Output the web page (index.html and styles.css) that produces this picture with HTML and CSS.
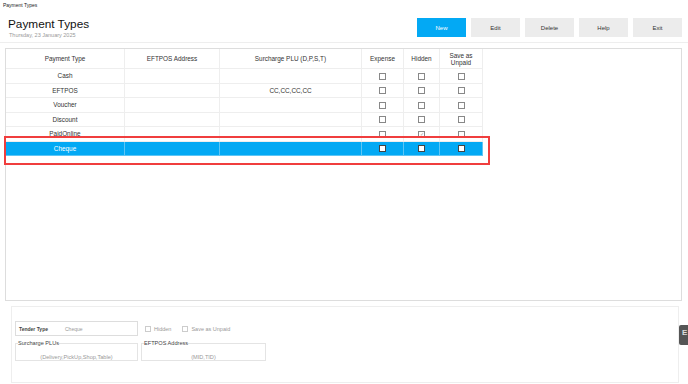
FILE: index.html
```html
<!DOCTYPE html>
<html lang="en">
  <head>
    <meta charset="UTF-8" />
    <title>Payment Types</title>
    <link rel="stylesheet" href="styles.css">
  </head>
  <body>
    <div class="titlebar">Payment Types</div>
    <div class="header">
      <div class="heading">
        <h1>Payment Types</h1>
        <div class="date">Thursday, 23 January 2025</div>
      </div>
      <div class="buttons">
        <button class="btn primary">New</button>
        <button class="btn">Edit</button>
        <button class="btn">Delete</button>
        <button class="btn">Help</button>
        <button class="btn">Exit</button>
      </div>
    </div>

    <!-- Payment type grid -->
    <div class="grid-panel">
      <table class="grid">
        <thead>
          <tr>
            <th class="c-type">Payment Type</th>
            <th class="c-eft">EFTPOS Address</th>
            <th class="c-plu">Surcharge PLU (D,P,S,T)</th>
            <th class="c-exp">Expense</th>
            <th class="c-hid">Hidden</th>
            <th class="c-unp">Save as<br>Unpaid</th>
          </tr>
        </thead>
        <tbody>
          <tr>
            <td>Cash</td><td></td><td></td>
            <td><span class="cb"></span></td><td><span class="cb"></span></td><td><span class="cb"></span></td>
          </tr>
          <tr>
            <td>EFTPOS</td><td></td><td>CC,CC,CC,CC</td>
            <td><span class="cb"></span></td><td><span class="cb"></span></td><td><span class="cb"></span></td>
          </tr>
          <tr>
            <td>Voucher</td><td></td><td></td>
            <td><span class="cb"></span></td><td><span class="cb"></span></td><td><span class="cb"></span></td>
          </tr>
          <tr>
            <td>Discount</td><td></td><td></td>
            <td><span class="cb"></span></td><td><span class="cb"></span></td><td><span class="cb"></span></td>
          </tr>
          <tr>
            <td>PaidOnline</td><td></td><td></td>
            <td><span class="cb"></span></td><td><span class="cb checked">&#10003;</span></td><td><span class="cb"></span></td>
          </tr>
          <tr class="selected">
            <td>Cheque</td><td></td><td></td>
            <td><span class="cb"></span></td><td><span class="cb"></span></td><td><span class="cb"></span></td>
          </tr>
        </tbody>
      </table>
      <div class="highlight"></div>
    </div>

    <!-- Detail editor -->
    <div class="detail-panel">
      <div class="detail-row">
        <div class="field">
          <span class="field-label">Tender Type</span>
          <span class="field-value">Cheque</span>
        </div>
        <label class="check"><span class="cb small"></span>Hidden</label>
        <label class="check"><span class="cb small"></span>Save as Unpaid</label>
      </div>
      <div class="detail-row">
        <fieldset class="group">
          <legend>Surcharge PLUs</legend>
          <div class="hint">(Delivery,PickUp,Shop,Table)</div>
        </fieldset>
        <fieldset class="group wide">
          <legend>EFTPOS Address</legend>
          <div class="hint">(MID,TID)</div>
        </fieldset>
      </div>
    </div>

    <div class="side-tab">E</div>
  </body>
</html>
```

FILE: styles.css
```css
/* Payment types screen */
body {
  font-family: "Liberation Sans", Arial, sans-serif;
  margin: 0;
  padding: 0;
  width: 688px;
  height: 384px;
  overflow: hidden;
  background-color: #fff;
  color: #333;
  position: relative;
}
.titlebar {
  height: 10px;
  line-height: 10px;
  font-size: 5px;
  padding-left: 3px;
  color: #222;
}
.header {
  display: flex;
  justify-content: space-between;
  height: 32px;
  padding: 0 6px 0 8px;
  border-bottom: 1px solid #eee;
}
h1 {
  font-size: 11.8px;
  font-weight: normal;
  line-height: 15px;
  margin: 7px 0 0 0;
  color: #111;
}
.date {
  font-size: 5.5px;
  line-height: 7px;
  color: #999;
  margin-left: 1px;
}
.buttons {
  display: flex;
  gap: 5px;
  margin-top: 8px;
}
.btn {
  width: 49px;
  height: 19px;
  border: none;
  padding: 0;
  font-family: inherit;
  font-size: 6px;
  color: #333;
  background-color: #ececec;
}
.btn.primary {
  background-color: #03a9f4;
  color: #fff;
}
.grid-panel {
  position: relative;
  margin: 5px 6px 0 5px;
  height: 251px;
  border: 1px solid #ddd;
}
.grid {
  border-collapse: collapse;
  font-size: 6.4px;
  color: #333;
}
.grid th,
.grid td {
  border: 1px solid #eee;
  text-align: center;
  padding: 0;
  font-weight: normal;
}
.grid tr:first-child th {
  border-top: none;
}
.grid th:first-child,
.grid td:first-child {
  border-left: none;
}
.grid th {
  height: 19px;
  line-height: 7px;
}
.grid td {
  height: 13.5px;
}
.c-type { width: 118px; }
.c-eft { width: 94px; }
.c-plu { width: 141px; }
.c-exp { width: 41px; }
.c-hid { width: 35px; }
.c-unp { width: 42px; }
.cb {
  display: inline-block;
  width: 5px;
  height: 5px;
  border: 1px solid #888;
  background-color: #fff;
  vertical-align: middle;
  font-size: 5px;
  line-height: 5px;
  color: #999;
}
.selected td {
  background-color: #03a9f4;
  color: #fff;
  border-color: #5ec6f5;
}
.selected .cb {
  border-color: #444;
}
.highlight {
  position: absolute;
  left: -2px;
  top: 87px;
  width: 486px;
  height: 29px;
  box-sizing: border-box;
  border: 2px solid #f03e3e;
}
.detail-panel {
  margin: 5px 9px 0 11px;
  border: 1px solid #eee;
  padding: 14px 3px 0 3px;
  box-sizing: border-box;
  height: 77px;
}
.detail-row {
  display: flex;
  align-items: center;
  gap: 3px;
}
.field {
  width: 121px;
  height: 13px;
  border: 1px solid #ddd;
  display: flex;
  align-items: center;
  font-size: 5px;
}
.field-label {
  width: 46px;
  padding-left: 3px;
  font-weight: bold;
  color: #444;
}
.field-value {
  color: #999;
}
.check {
  display: flex;
  align-items: center;
  gap: 3px;
  font-size: 5.5px;
  color: #999;
  margin-left: 4px;
}
.check + .check {
  margin-left: 8px;
}
.cb.small {
  width: 4px;
  height: 4px;
  border-color: #ccc;
}
.group {
  width: 121px;
  height: 19px;
  margin: 4px 0 0 0;
  padding: 0;
  border: 1px solid #e4e4e4;
  box-sizing: content-box;
}
.group.wide {
  width: 123px;
}
.group legend {
  font-size: 5.6px;
  color: #444;
  padding: 0;
  margin-left: 2px;
}
.hint {
  font-size: 5.6px;
  color: #999;
  text-align: center;
  margin-top: 8px;
}
.side-tab {
  position: absolute;
  left: 679px;
  top: 325px;
  width: 12px;
  height: 20px;
  background-color: #555;
  color: #ddd;
  font-size: 8px;
  font-weight: bold;
  padding: 3px 0 0 3px;
  box-sizing: border-box;
  border-radius: 2px 0 0 2px;
}
```
